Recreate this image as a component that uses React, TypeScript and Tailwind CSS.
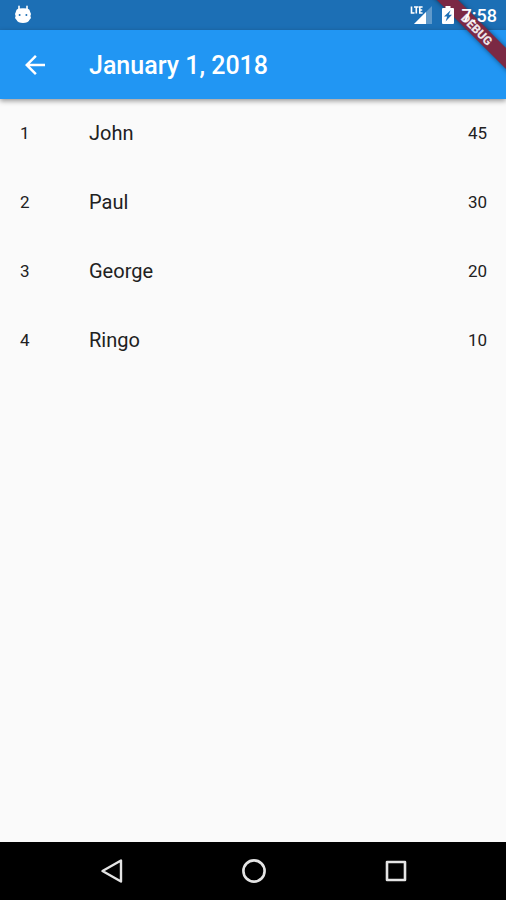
interface Player {
  name: string
  score: number
}

const players: Player[] = [
  { name: "John", score: 45 },
  { name: "Paul", score: 30 },
  { name: "George", score: 20 },
  { name: "Ringo", score: 10 },
]

function DebugRobotIcon() {
  return (
    <svg width="18" height="20" viewBox="0 0 18 20" fill="white" aria-hidden="true">
      <path d="M5 1.2V5M13 1.2V5" stroke="white" strokeWidth="1.6" strokeLinecap="round" />
      <path d="M4.5 3.6Q9 2.8 13.5 3.6 16 4.2 16.2 7L17 9 16.4 11 17 13 15.6 14.8Q14 18 9 18T2.4 14.8L1 13 1.6 11 1 9 1.8 7Q2 4.2 4.5 3.6Z" />
      <circle cx="5.6" cy="10" r="1" fill="#1c6fb5" />
      <circle cx="12.4" cy="10" r="1" fill="#1c6fb5" />
    </svg>
  )
}

function SignalIcon() {
  return (
    <svg width="23" height="20" viewBox="0 0 23 20" aria-hidden="true">
      <path d="M22 1V19H4Z" fill="white" fillOpacity="0.3" />
      <path d="M16 7V19H4Z" fill="white" />
      <path d="M0 0H14V8L12 10H0Z" fill="#1c6fb5" />
      <path d="M1.5 1.5V8H4.5M4 2H8.6M6.3 2V8.6M12.6 2H9.8V8H12.6M9.8 5H12.2" fill="none" stroke="white" strokeWidth="1.6" />
    </svg>
  )
}

function BatteryIcon() {
  return (
    <svg width="12" height="18" viewBox="0 0 12 18" aria-hidden="true">
      <path d="M3.5 0H8.5V2H11Q12 2 12 3V17Q12 18 11 18H1Q0 18 0 17V3Q0 2 1 2H3.5Z" fill="white" />
      <path d="M8.6 4.2 2 10.4H5.2L3.6 15.6 10 8.8H6.8Z" fill="#1c6fb5" />
    </svg>
  )
}

function DebugBanner() {
  return (
    <div className="pointer-events-none absolute top-0 right-0 size-20 overflow-hidden">
      <div className="absolute top-[22px] -left-[9px] flex h-[15px] w-[120px] rotate-45 items-center justify-center bg-[#7b2944] text-[12px] leading-none font-black text-[#eee4e8] shadow-[0_0_5px_rgba(0,0,0,0.5)]">
        DEBUG
      </div>
    </div>
  )
}

function StatusBar() {
  return (
    <div className="flex h-[30px] items-center justify-between bg-[#1c6fb5] pr-[9px] pl-[14px]">
      <DebugRobotIcon />
      <div className="relative z-10 flex items-center">
        <SignalIcon />
        <div className="ml-[9px]">
          <BatteryIcon />
        </div>
        <span className="ml-2 pt-[2px] text-[18px] leading-none font-medium text-white">7:58</span>
      </div>
    </div>
  )
}

function AppBar() {
  return (
    <header className="relative flex h-[69px] items-center bg-[#2196f3] pl-[20px] text-white shadow-[0_2px_5px_rgba(0,0,0,0.4)]">
      <button type="button" aria-label="Back" className="mr-[39px]">
        <svg width="30" height="30" viewBox="0 0 24 24" fill="currentColor">
          <path d="M20 11H7.83l5.59-5.59L12 4l-8 8 8 8 1.41-1.41L7.83 13H20v-2z" />
        </svg>
      </button>
      <h1 className="pt-[2px] text-[25px] leading-none font-medium">January 1, 2018</h1>
    </header>
  )
}

function NavigationBar() {
  return (
    <nav className="flex h-[58px] items-center justify-center gap-[114px] bg-black pl-[2px] text-[#e4e4e4]">
      <button type="button" aria-label="Back">
        <svg width="28" height="28" viewBox="0 0 28 28" fill="none" stroke="currentColor" strokeWidth="2.4" strokeLinejoin="round">
          <path d="M23 3.5V24.5L4.5 14Z" />
        </svg>
      </button>
      <button type="button" aria-label="Home">
        <svg width="28" height="28" viewBox="0 0 28 28" fill="none" stroke="currentColor" strokeWidth="2.6">
          <circle cx="14" cy="14" r="10.6" />
        </svg>
      </button>
      <button type="button" aria-label="Overview">
        <svg width="28" height="28" viewBox="0 0 28 28" fill="none" stroke="currentColor" strokeWidth="2.6" strokeLinejoin="round">
          <rect x="5" y="5" width="18" height="18" />
        </svg>
      </button>
    </nav>
  )
}

export default function App() {
  return (
    <div className="relative flex min-h-screen flex-col bg-[#fafafa] font-['Roboto',sans-serif]">
      <StatusBar />
      <AppBar />
      <DebugBanner />
      <main className="flex-1">
        <ol>
          {players.map((player, index) => (
            <li key={player.name} className="flex h-[69px] items-center pr-[19px] pl-[20px] text-[#212121]">
              <span className="w-[69px] text-[17px]">{index + 1}</span>
              <span className="flex-1 pb-[2px] text-[20px]">{player.name}</span>
              <span className="text-[17px]">{player.score}</span>
            </li>
          ))}
        </ol>
      </main>
      <NavigationBar />
    </div>
  )
}
